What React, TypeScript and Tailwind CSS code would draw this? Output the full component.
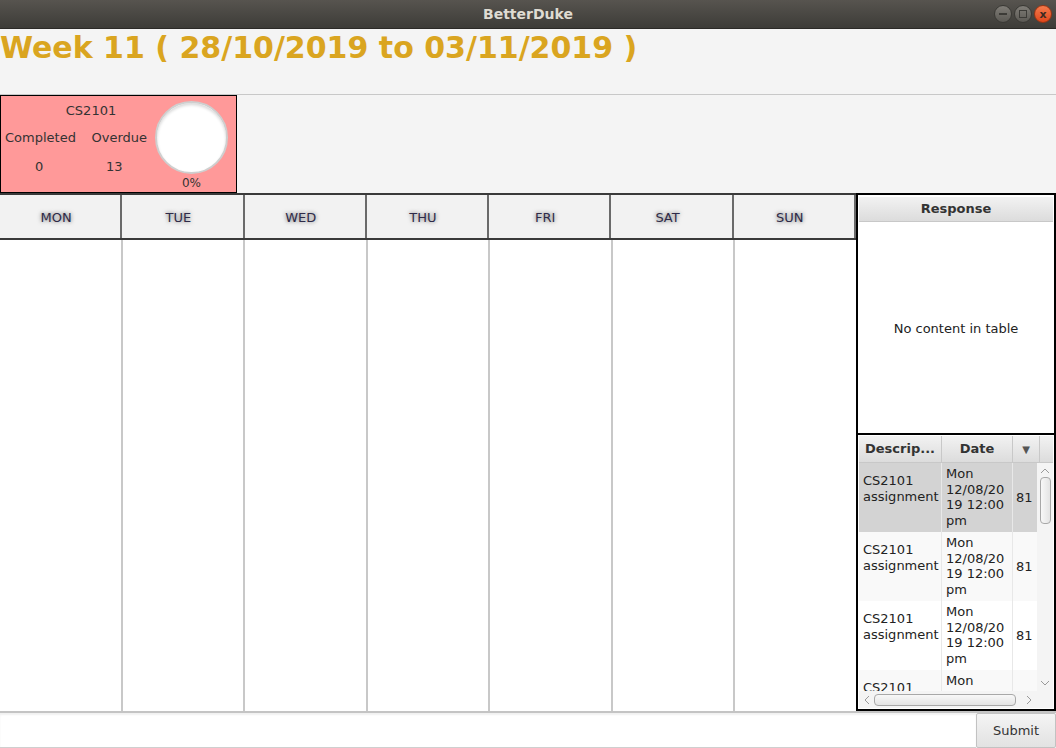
import React from "react";

const days = ["MON", "TUE", "WED", "THU", "FRI", "SAT", "SUN"];

const rows = [
  { bg: "bg-[#d3d3d3]" },
  { bg: "bg-[#f9f9f9]" },
  { bg: "bg-white" },
  { bg: "bg-[#f9f9f9]" },
];

function Chevron({ dir }: { dir: "up" | "down" | "left" | "right" }) {
  const d = {
    up: "M1 6 L5 2 L9 6",
    down: "M1 2 L5 6 L9 2",
    left: "M6 1 L2 5 L6 9",
    right: "M2 1 L6 5 L2 9",
  }[dir];
  const horiz = dir === "left" || dir === "right";
  return (
    <svg width={horiz ? 8 : 10} height={horiz ? 10 : 8} viewBox={horiz ? "0 0 8 10" : "0 0 10 8"} className="shrink-0">
      <path d={d} fill="none" stroke="#9a9a9a" strokeWidth="1" />
    </svg>
  );
}

function TitleBar() {
  return (
    <div className="relative h-[29px] flex items-center justify-center bg-gradient-to-b from-[#57544f] to-[#3d3c38] border-b border-[#2b2a27]">
      <span className="text-[14px] font-bold text-[#dfdbd2]">BetterDuke</span>
      <div className="absolute right-[4px] top-[5px] flex gap-[2px]">
        <div className="w-[18px] h-[18px] rounded-full bg-gradient-to-b from-[#807d77] to-[#5b5954] border border-[#3a3935] flex items-center justify-center">
          <div className="w-[8px] h-[2px] bg-[#3c3b37]" />
        </div>
        <div className="w-[18px] h-[18px] rounded-full bg-gradient-to-b from-[#807d77] to-[#5b5954] border border-[#3a3935] flex items-center justify-center">
          <div className="w-[8px] h-[8px] border-[1.5px] border-[#3c3b37]" />
        </div>
        <div className="w-[18px] h-[18px] rounded-full bg-gradient-to-b from-[#f47a4b] to-[#e0461a] border border-[#9b3514] flex items-center justify-center">
          <span className="text-[11px] leading-none text-[#3c2a22] font-bold">x</span>
        </div>
      </div>
    </div>
  );
}

function ModuleCard() {
  return (
    <div className="w-[237px] h-[98px] bg-[#ff9999] border-[1.5px] border-black flex text-[13px] text-[#333]">
      <div className="w-[150px] flex flex-col">
        <div className="text-center pt-[5px] pl-[30px] h-[27px]">CS2101</div>
        <div className="flex justify-between px-[4px] h-[30px] items-center">
          <span>Completed</span>
          <span>Overdue</span>
        </div>
        <div className="flex h-[28px] items-center">
          <span className="w-[80px] text-center">0</span>
          <span className="w-[77px] text-center">13</span>
        </div>
      </div>
      <div className="flex-1 flex flex-col items-center pt-[5px] pr-[4px]">
        <div className="w-[73px] h-[73px] rounded-full bg-white border-[2px] border-[#cfcfcf] shadow-[inset_0_2px_3px_rgba(0,0,0,0.15)]" />
        <span className="text-[12px] leading-none mt-[3px]">0%</span>
      </div>
    </div>
  );
}

function Calendar() {
  return (
    <div className="w-[856px] flex flex-col">
      <div className="flex h-[47px] border-y-[2px] border-[#3a3a3a] bg-[#f2f2f2]">
        {days.map((d, i) => (
          <div
            key={d}
            className={`flex-1 flex items-center justify-center pt-[3px] pr-[8px] text-[13px] text-[#2e2a48] [text-shadow:0_0_4px_rgba(0,0,0,0.6)] ${i > 0 ? "border-l-[2px] border-[#6a6a6a]" : ""} ${i === 6 ? "border-r-[2px] border-[#3a3a3a]" : ""}`}
          >
            {d}
          </div>
        ))}
      </div>
      <div className="flex flex-1 bg-white">
        {days.map((d, i) => (
          <div key={d} className={`flex-1 ${i > 0 ? "border-l-[2px] border-[#c8c8c8]" : ""}`} />
        ))}
      </div>
    </div>
  );
}

function TaskTable() {
  return (
    <div className="flex-1 flex flex-col bg-white min-h-0 relative overflow-hidden">
      <div className="flex h-[27px] shrink-0 bg-gradient-to-b from-[#f2f2f2] to-[#dcdcdc] border-b border-[#c8c8c8] text-[13px] font-bold text-[#333]">
        <div className="w-[83px] flex items-center justify-center border-r border-[#c8c8c8]">Descrip...</div>
        <div className="w-[71px] flex items-center justify-center border-r border-[#c8c8c8]">Date</div>
        <div className="w-[27px] flex items-center justify-center border-r border-[#c8c8c8] text-[10px] text-[#555]">▼</div>
        <div className="flex-1" />
      </div>
      <div className="flex-1 flex flex-col overflow-hidden">
        {rows.map((r, i) => (
          <div key={i} className={`flex h-[69px] shrink-0 ${r.bg} text-[13px] leading-[15.5px] text-[#222]`}>
            <div className="w-[83px] pl-[4px] pt-[10px] border-r border-[#e8e8e8]">
              CS2101
              <br />
              assignment
            </div>
            <div className="w-[71px] pl-[4px] pt-[3px] border-r border-[#e8e8e8]">
              Mon
              <br />
              12/08/20
              <br />
              19 12:00
              <br />
              pm
            </div>
            <div className="w-[27px] flex items-center pl-[3px]">81</div>
          </div>
        ))}
      </div>
      <div className="absolute right-0 top-[27px] bottom-[17px] w-[16px] bg-[#f4f4f4] flex flex-col items-center pt-[4px] pb-[4px]">
        <Chevron dir="up" />
        <div className="w-[11px] h-[47px] mt-[2px] rounded-[4px] border border-[#a8a8a8] bg-gradient-to-r from-[#f8f8f8] to-[#e4e4e4]" />
        <div className="flex-1" />
        <Chevron dir="down" />
      </div>
      <div className="absolute left-0 right-0 bottom-0 h-[17px] bg-[#f4f4f4] flex items-center pl-[4px] pr-[20px] gap-[3px]">
        <Chevron dir="left" />
        <div className="flex-1 h-[12px] rounded-[4px] border border-[#a8a8a8] bg-gradient-to-b from-[#f8f8f8] to-[#e4e4e4] mr-[6px]" />
        <Chevron dir="right" />
      </div>
    </div>
  );
}

function SidePanel() {
  return (
    <div className="w-[200px] border-[2px] border-black flex flex-col bg-white">
      <div className="h-[238px] flex flex-col pt-[2px] px-[1px]">
        <div className="h-[25px] bg-gradient-to-b from-[#f2f2f2] to-[#dcdcdc] border-b border-[#c8c8c8] flex items-center justify-center text-[13px] font-bold text-[#333]">
          Response
        </div>
        <div className="flex-1 flex items-center justify-center text-[13px] text-[#222] pt-[2px]">No content in table</div>
      </div>
      <div className="h-[2px] bg-black" />
      <div className="flex-1 flex flex-col p-[1px] min-h-0">
        <TaskTable />
      </div>
    </div>
  );
}

export default function App() {
  return (
    <div className="w-[1056px] h-[748px] flex flex-col bg-[#f4f4f4] overflow-hidden font-['DejaVu_Sans',sans-serif]">
      <TitleBar />
      <div className="h-[66px] border-b border-[#c8c8c8]">
        <h1 className="text-[30px] leading-[36px] font-bold text-[#daa520] pt-[1px]">
          Week 11 ( 28/10/2019 to 03/11/2019 )
        </h1>
      </div>
      <ModuleCard />
      <div className="flex flex-1 min-h-0">
        <Calendar />
        <SidePanel />
      </div>
      <div className="h-[37px] flex border-t-[2px] border-[#c4c4c4]">
        <div className="flex-1 bg-white border-b border-[#cfcfcf] shadow-[inset_0_2px_2px_rgba(0,0,0,0.06)]" />
        <div className="w-[80px] flex items-center justify-center text-[13px] text-[#333] bg-gradient-to-b from-[#f4f4f4] to-[#e2e2e2] border border-[#c2c2c2] rounded-[2px]">
          Submit
        </div>
      </div>
    </div>
  );
}
